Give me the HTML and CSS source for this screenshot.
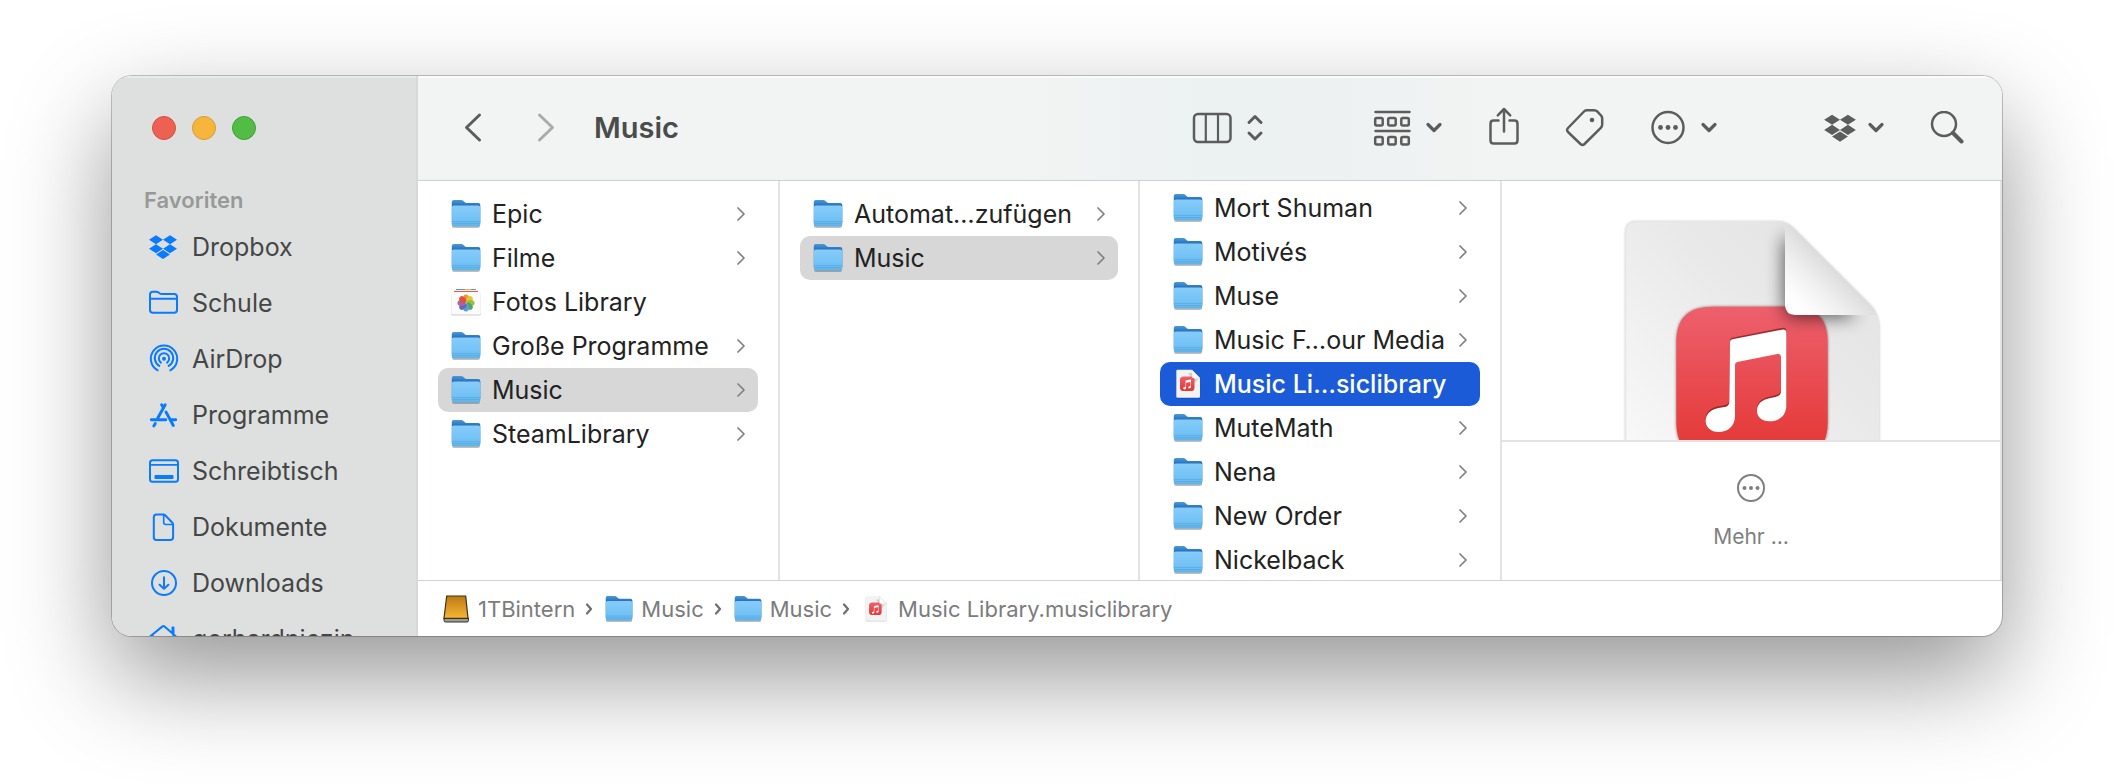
FILE: index.html
```html
<!DOCTYPE html>
<html lang="de">
<head>
<meta charset="utf-8">
<title>Music</title>
<link rel="stylesheet" href="styles.css">
</head>
<body>
<svg class="sprite" width="0" height="0" aria-hidden="true">
  <defs>
    <linearGradient id="folder-back" x1="0" y1="0" x2="0" y2="1">
      <stop offset="0" stop-color="#4a9ad8"/><stop offset=".3" stop-color="#1d66b6"/><stop offset="1" stop-color="#1d66b6"/>
    </linearGradient>
    <linearGradient id="folder-front" x1="0" y1="0" x2="0" y2="1">
      <stop offset="0" stop-color="#86ccf9"/><stop offset=".75" stop-color="#70c0f5"/><stop offset="1" stop-color="#5fb0e6"/>
    </linearGradient>
    <linearGradient id="red" x1="0" y1="0" x2="0" y2="1">
      <stop offset="0" stop-color="#ed606d"/><stop offset=".85" stop-color="#e53c3c"/><stop offset="1" stop-color="#e53a39"/>
    </linearGradient>
    <linearGradient id="sheet" gradientUnits="userSpaceOnUse" x1="1000" y1="200" x2="400" y2="800">
      <stop offset="0" stop-color="#e4e4e4"/><stop offset=".35" stop-color="#e9e9e9"/><stop offset="1" stop-color="#f8f8f8"/>
    </linearGradient>
    <linearGradient id="fold" gradientUnits="userSpaceOnUse" x1="1000" y1="258" x2="890" y2="368">
      <stop offset="0" stop-color="#dcdcdc"/><stop offset=".5" stop-color="#f0f0f0"/><stop offset="1" stop-color="#fefefe"/>
    </linearGradient>
    <linearGradient id="gold" x1="0" y1="0" x2="0" y2="1">
      <stop offset="0" stop-color="#bd7a17"/><stop offset="1" stop-color="#f6b534"/>
    </linearGradient>
    <filter id="blur-large" x="-30%" y="-30%" width="160%" height="160%"><feGaussianBlur stdDeviation="26"/></filter>
    <filter id="blur-small" x="-10%" y="-10%" width="120%" height="120%"><feGaussianBlur stdDeviation="5"/></filter>
    <clipPath id="sheet-clip"><path d="M377 155Q377 122 408 122H835Q860 122 880 142L1110 372Q1137 400 1137 440V1080H377Z"/></clipPath>
    <path id="note" d="M690 484Q690 477 697 475L845 446Q858 443 859 455V672C859 706 836 721 808 721C785 721 771 707 771 690C771 668 787 656 808 652L826 648Q843 645 843 630V528Q842 517 832 519L712 543Q705 545 705 552V704C705 735 684 753 655 753C632 753 617 738 617 720C617 698 634 685 655 681L674 678Q688 675 688 662Z"/>
  </defs>
  <symbol id="folder" viewBox="0 0 30 30">
    <path d="M1 5v22q0 2 2 2h24q2 0 2-2V6z" fill="#000" opacity=".25"/>
    <path d="M.8 3q0-2 2-2h7.4q1.300 0 2.300 1l1 1q.9.900 2.200.900H27.300q2 0 2 2V24H.8z" fill="url(#folder-back)"/>
    <path d="M.8 8.500q0-2 2-2h24.500q2 0 2 2v17q0 2-2 2H2.800q-2 0-2-2z" fill="url(#folder-front)"/>
    <path d="M1 22.500h28M1 24.500h28" stroke="#4d9fd6" stroke-width=".7" opacity=".7"/>
  </symbol>
  <symbol id="musicfile" viewBox="0 0 30 30">
    <path d="M3 2.500Q3 1 4.500 1H19l8.200 8.200V28q0 1.500-1.500 1.500H4.500Q3 29.500 3 28z" fill="#000" opacity=".18"/>
    <path d="M3.300 2Q3.300.8 4.500.8H19l8 8.200V27.500q0 1.200-1.200 1.200H4.500q-1.200 0-1.200-1.200z" fill="#f3f3f3"/>
    <path d="M15 4h4v6h6l-3 4z" fill="#999" opacity=".4"/>
    <rect x="7" y="7.500" width="14.500" height="14.500" rx="3.600" fill="url(#red)"/>
    <path d="M19 1v6.500q0 1.500 1.500 1.500H27z" fill="#fff" stroke="#bbb" stroke-width=".4"/>
    <use href="#note" transform="translate(-9.500 -3.700) scale(.0320)" fill="#fff"/>
  </symbol>
  <symbol id="photos" viewBox="0 0 30 30">
    <path d="M5 2.500h20" stroke="#4a9ed8" stroke-width="1"/><path d="M14 2.500h6" stroke="#d8c14a" stroke-width="1"/>
    <path d="M3 4.500h24" stroke="#e0603f" stroke-width="1.200"/>
    <rect x="0" y="6" width="30" height="22.500" rx="1.500" fill="#000" opacity=".2"/>
    <rect x=".2" y="5.300" width="29.600" height="22.200" rx="1.500" fill="#fbfbfb"/>
    <g transform="translate(15 16) scale(.95)" opacity=".95">
      <ellipse cy="-4.800" rx="3.100" ry="4.200" fill="#f08f23"/>
      <ellipse cy="-4.800" rx="3.100" ry="4.200" fill="#e0c62c" transform="rotate(45)"/>
      <ellipse cy="-4.800" rx="3.100" ry="4.200" fill="#96bb34" transform="rotate(90)"/>
      <ellipse cy="-4.800" rx="3.100" ry="4.200" fill="#45a557" transform="rotate(135)"/>
      <ellipse cy="-4.800" rx="3.100" ry="4.200" fill="#4f9bdb" transform="rotate(180)"/>
      <ellipse cy="-4.800" rx="3.100" ry="4.200" fill="#625db3" transform="rotate(225)"/>
      <ellipse cy="-4.800" rx="3.100" ry="4.200" fill="#a95a9d" transform="rotate(270)"/>
      <ellipse cy="-4.800" rx="3.100" ry="4.200" fill="#e04a35" transform="rotate(315)"/>
    </g>
  </symbol>
  <symbol id="drive" viewBox="0 0 26 28">
    <path d="M1 23h24.500v2.500q0 1.500-1.500 1.500H2.500Q1 27 1 25.500z" fill="#9b9c98" stroke="#33332e" stroke-width="1"/>
    <path d="M3.700 1h19l2.300 22.300H1z" fill="url(#gold)" stroke="#40300f" stroke-width="1.200"/>
  </symbol>
  <symbol id="next" viewBox="0 0 8 14"><path d="M1 1l6 6-6 6" fill="none" stroke="#808080" stroke-width="1.700" stroke-linecap="round" stroke-linejoin="round"/></symbol>
  <symbol id="step" viewBox="0 0 8 12"><path d="M2 1.500L6 6l-4 4.500" fill="none" stroke="#6e6e6e" stroke-width="2.200" stroke-linecap="round" stroke-linejoin="round"/></symbol>
  <symbol id="caret" viewBox="0 0 16 12"><path d="M2 2.500l6 6 6-6" fill="none" stroke="currentColor" stroke-width="3.200" stroke-linecap="round" stroke-linejoin="round"/></symbol>
  <symbol id="dropbox" viewBox="0 0 30 30">
    <path d="M8 3.200l7 4.500-7 4.500-7-4.500zM22 3.200l7 4.500-7 4.500-7-4.500zM8 12.200l7 4.500-7 4.500-7-4.500zM22 12.200l7 4.500-7 4.500-7-4.500zM15 18.100l7 4.500-7 4.500-7-4.500z" fill="currentColor"/>
  </symbol>
</svg>

<div class="window">
  <aside class="sidebar">
    <div class="lights">
      <button class="light close" aria-label="Schließen"></button>
      <button class="light minimize" aria-label="Im Dock ablegen"></button>
      <button class="light maximize" aria-label="Vollbild"></button>
    </div>
    <h2 class="sidebar-title">Favoriten</h2>
    <nav class="places">
      <a class="place" href="#"><svg class="place-icon" viewBox="0 0 32 30"><use href="#dropbox" width="30" height="30"/></svg>Dropbox</a>
      <a class="place" href="#"><svg class="place-icon line" viewBox="0 0 32 30"><path d="M2 6.500q0-2.800 2.800-2.800h3.400q1.400 0 2.400.8l1 .8q1 .7 2.200.7H26.200Q29 6 29 8.800V22q0 2.800-2.800 2.800H4.800Q2 24.800 2 22zM2 10.700h27"/></svg>Schule</a>
      <a class="place" href="#"><svg class="place-icon line" viewBox="0 0 32 30"><path d="M9.700 26.300a13.200 13.200 0 1 1 12.600 0M11.300 21.900a9.200 9.200 0 1 1 9.400 0M12.900 18.600a5.200 5.200 0 1 1 6.200 0"/><circle cx="16" cy="14.700" r="2" class="solid"/></svg>AirDrop</a>
      <a class="place" href="#"><svg class="place-icon line" viewBox="0 0 32 30"><path d="M17.200 4.700L9.800 18M13.600 4.700l2 3.300M18 12l7.300 13.500M3.300 19.700h14.500M22.500 19.700h5.200M7.300 23.500l-1.500 2.500" stroke-width="2.900"/></svg>Programme</a>
      <a class="place" href="#"><svg class="place-icon line" viewBox="0 0 32 30"><rect x="2" y="4.200" width="28" height="21.500" rx="2.500"/><path d="M2 8.900h28" stroke-width="1.600"/><rect x="6.500" y="19" width="19" height="4" rx="1" class="solid"/></svg>Schreibtisch</a>
      <a class="place" href="#"><svg class="place-icon line" viewBox="0 0 32 30"><path d="M8.500 2.500h7q1 0 1.700.7l7.200 7.600q.7.700.7 1.700V25.200q0 2.800-2.800 2.800H8.300q-2.500 0-2.500-2.800V5.300q0-2.800 2.700-2.800z"/><path d="M15.700 3v7.600q0 1.900 1.900 1.900H25" stroke-width="1.600"/></svg>Dokumente</a>
      <a class="place" href="#"><svg class="place-icon line" viewBox="0 0 32 30"><circle cx="16" cy="15" r="12"/><path d="M16 9.300v11.500M11.600 16.700l4.400 4.200 4.400-4.200"/></svg>Downloads</a>
      <a class="place" href="#"><svg class="place-icon line" viewBox="0 0 32 30"><path d="M2 12.500L14.500 2.400q1-.8 2 0L28 12.500M24.500 9V3.500h1V10M5 12v15h20V12"/></svg>gerhardniezin</a>
    </nav>
  </aside>

  <main class="main">
    <header class="toolbar">
      <button class="tool" aria-label="Zurück"><svg width="20" height="32" viewBox="0 0 20 32"><path d="M16.500 3L3.500 15.500l13 12.500" stroke-width="3"/></svg></button>
      <button class="tool forward" aria-label="Vorwärts"><svg width="20" height="32" viewBox="0 0 20 32"><path d="M3.500 3L16.500 15.500l-13 12.500" stroke-width="3"/></svg></button>
      <h1 class="title">Music</h1>
      <div class="tools">
        <button class="tool view" aria-label="Darstellung">
          <svg width="40" height="32" viewBox="0 0 40 32"><rect x="2" y="2" width="36.500" height="28" rx="4"/><path d="M13.800 2v28M26 2v28" stroke-width="2.200"/></svg>
          <svg width="18" height="30" viewBox="0 0 18 30"><path d="M3 9.500L9 3.500l6 6M3 20l6 6 6-6" stroke-width="3"/></svg>
        </button>
        <button class="tool" aria-label="Gruppieren">
          <svg width="38" height="38" viewBox="0 0 38 38"><path d="M2.500 3h34M2.500 22h34"/><rect x="2.200" y="9" width="7.500" height="7.500" rx="1.500"/><rect x="15.200" y="9" width="7.500" height="7.500" rx="1.500"/><rect x="28.300" y="9" width="7.500" height="7.500" rx="1.500"/><rect x="2.200" y="28" width="7.500" height="7.500" rx="1.500"/><rect x="15.200" y="28" width="7.500" height="7.500" rx="1.500"/><rect x="28.300" y="28" width="7.500" height="7.500" rx="1.500"/></svg>
          <svg class="caret"><use href="#caret"/></svg>
        </button>
        <button class="tool" aria-label="Teilen">
          <svg width="32" height="42" viewBox="0 0 32 42"><path d="M10.500 13.500H5.500Q2.500 13.500 2.500 16.500V33.500Q2.500 36.500 5.500 36.500H26.500Q29.500 36.500 29.500 33.500V16.500Q29.500 13.500 26.500 13.500H21.500M16 24.500V2.500M9.800 8.300L16 2l6.200 6.300"/></svg>
        </button>
        <button class="tool" aria-label="Tags">
          <svg width="40" height="40" viewBox="0 0 40 40"><path d="M21.500 2.200H29Q31 2.200 32.200 3.400L36 7.500Q37.200 8.700 37.200 10.400V16.500Q37.200 18.500 35.800 19.900L19.500 36Q17.500 37.800 15.500 36L3 24Q1.200 22 3 20L19 3.500Q20 2.200 21.500 2.200z"/><circle cx="27" cy="12" r="2.300" class="fill"/></svg>
        </button>
        <button class="tool" aria-label="Aktionen">
          <svg width="36" height="36" viewBox="0 0 36 36"><circle cx="18" cy="17.500" r="15.500"/><g class="fill"><circle cx="10.500" cy="17.500" r="2.400"/><circle cx="18" cy="17.500" r="2.400"/><circle cx="25.500" cy="17.500" r="2.400"/></g></svg>
          <svg class="caret"><use href="#caret"/></svg>
        </button>
        <button class="tool cloud" aria-label="Dropbox">
          <svg width="34" height="34"><use href="#dropbox"/></svg>
          <svg class="caret"><use href="#caret"/></svg>
        </button>
        <button class="tool" aria-label="Suchen">
          <svg width="34" height="34" viewBox="0 0 34 34"><circle cx="14" cy="13" r="12"/><path d="M23 22l8.500 8.500" stroke-width="3.600"/></svg>
        </button>
      </div>
    </header>

    <div class="browser">
      <ul class="column">
        <li><a class="row" href="#"><svg class="icon"><use href="#folder"/></svg><span class="name">Epic</span><svg class="next"><use href="#next"/></svg></a></li>
        <li><a class="row" href="#"><svg class="icon"><use href="#folder"/></svg><span class="name">Filme</span><svg class="next"><use href="#next"/></svg></a></li>
        <li><a class="row" href="#"><svg class="icon"><use href="#photos"/></svg><span class="name">Fotos Library</span></a></li>
        <li><a class="row" href="#"><svg class="icon"><use href="#folder"/></svg><span class="name">Große Programme</span><svg class="next"><use href="#next"/></svg></a></li>
        <li><a class="row open" href="#"><svg class="icon"><use href="#folder"/></svg><span class="name">Music</span><svg class="next"><use href="#next"/></svg></a></li>
        <li><a class="row" href="#"><svg class="icon"><use href="#folder"/></svg><span class="name">SteamLibrary</span><svg class="next"><use href="#next"/></svg></a></li>
      </ul>
      <ul class="column">
        <li><a class="row" href="#"><svg class="icon"><use href="#folder"/></svg><span class="name">Automat…zufügen</span><svg class="next"><use href="#next"/></svg></a></li>
        <li><a class="row open" href="#"><svg class="icon"><use href="#folder"/></svg><span class="name">Music</span><svg class="next"><use href="#next"/></svg></a></li>
      </ul>
      <ul class="column scrolled">
        <li><a class="row" href="#"><svg class="icon"><use href="#folder"/></svg><span class="name">Mort Shuman</span><svg class="next"><use href="#next"/></svg></a></li>
        <li><a class="row" href="#"><svg class="icon"><use href="#folder"/></svg><span class="name">Motivés</span><svg class="next"><use href="#next"/></svg></a></li>
        <li><a class="row" href="#"><svg class="icon"><use href="#folder"/></svg><span class="name">Muse</span><svg class="next"><use href="#next"/></svg></a></li>
        <li><a class="row" href="#"><svg class="icon"><use href="#folder"/></svg><span class="name">Music F…our Media</span><svg class="next"><use href="#next"/></svg></a></li>
        <li><a class="row selected" href="#"><svg class="icon"><use href="#musicfile"/></svg><span class="name">Music Li…siclibrary</span></a></li>
        <li><a class="row" href="#"><svg class="icon"><use href="#folder"/></svg><span class="name">MuteMath</span><svg class="next"><use href="#next"/></svg></a></li>
        <li><a class="row" href="#"><svg class="icon"><use href="#folder"/></svg><span class="name">Nena</span><svg class="next"><use href="#next"/></svg></a></li>
        <li><a class="row" href="#"><svg class="icon"><use href="#folder"/></svg><span class="name">New Order</span><svg class="next"><use href="#next"/></svg></a></li>
        <li><a class="row" href="#"><svg class="icon"><use href="#folder"/></svg><span class="name">Nickelback</span><svg class="next"><use href="#next"/></svg></a></li>
      </ul>
      <section class="preview">
        <div class="artwork">
          <svg width="262" height="346" viewBox="360 108 786 1038" role="img" aria-label="Music Library">
            <path d="M377 155Q377 122 408 122H835Q860 122 880 142L1110 372Q1137 400 1137 440V1080H377Z" fill="#000" opacity=".3" filter="url(#blur-small)"/>
            <path d="M377 155Q377 122 408 122H835Q860 122 880 142L1110 372Q1137 400 1137 440V1080H377Z" fill="url(#sheet)" stroke="#e6e6e6" stroke-width="4"/>
            <path d="M529 485C529 410 565 377 640 377H872C947 377 983 410 983 485V723C983 798 947 831 872 831H640C565 831 529 798 529 723Z" fill="#5a1010" opacity=".6" filter="url(#blur-small)"/>
            <path d="M529 485C529 410 565 377 640 377H872C947 377 983 410 983 485V723C983 798 947 831 872 831H640C565 831 529 798 529 723Z" fill="url(#red)"/>
            <use href="#note" y="-5" fill="#7c1a1a" opacity=".7"/>
            <use href="#note" fill="#fff"/>
            <g clip-path="url(#sheet-clip)"><path d="M850 160V375Q858 410 885 410H1070L880 180z" fill="#000" opacity=".6" filter="url(#blur-large)"/></g>
            <path d="M855 126V373Q857 402 885 402H1129Q1122 384 1110 372L880 142Q868 130 855 126z" fill="url(#fold)"/>
          </svg>
        </div>
        <div class="more-area">
          <button class="more">
            <svg width="30" height="30" viewBox="0 0 30 30"><circle cx="15" cy="15" r="13" fill="none" stroke="currentColor" stroke-width="2"/><g fill="currentColor"><circle cx="8.500" cy="15" r="2"/><circle cx="15" cy="15" r="2"/><circle cx="21.500" cy="15" r="2"/></g></svg>
            <span>Mehr …</span>
          </button>
        </div>
      </section>
    </div>

    <nav class="path">
      <a class="crumb" href="#"><svg class="crumb-icon"><use href="#drive"/></svg>1TBintern</a>
      <svg class="step"><use href="#step"/></svg>
      <a class="crumb" href="#"><svg class="crumb-icon"><use href="#folder"/></svg>Music</a>
      <svg class="step"><use href="#step"/></svg>
      <a class="crumb" href="#"><svg class="crumb-icon"><use href="#folder"/></svg>Music</a>
      <svg class="step"><use href="#step"/></svg>
      <a class="crumb last" href="#"><svg class="crumb-icon"><use href="#musicfile"/></svg>Music Library.musiclibrary</a>
    </nav>
  </main>
</div>
</body>
</html>
```

FILE: styles.css
```css
* { box-sizing: border-box; }

body {
  margin: 0;
  padding: 76px 112px 148px;
  min-height: 100vh;
  background: #fff;
  color: #222;
  font-family: Inter, "Liberation Sans", sans-serif;
  font-size: 25px;
  line-height: 32px;
}

a { color: inherit; text-decoration: none; }

button {
  margin: 0;
  padding: 0;
  border: 0;
  background: none;
  font: inherit;
  color: inherit;
}

svg { display: block; flex: none; }

.sprite { position: absolute; }

.window {
  display: flex;
  height: calc(100vh - 224px);
  min-height: 400px;
  border-radius: 20px;
  overflow: hidden;
  background: #fff;
  box-shadow: 0 0 0 1px rgba(0, 0, 0, .22), 0 40px 100px rgba(0, 0, 0, .42);
}

/* Sidebar */

.sidebar {
  flex: none;
  width: 306px;
  overflow: hidden;
  background: #dee0df;
  border-right: 2px solid #d6d9d8;
  box-shadow: inset 0 2px #e9eaea;
}

.lights {
  display: flex;
  align-items: center;
  gap: 16px;
  height: 104px;
  padding-left: 40px;
}

.light {
  width: 24px;
  height: 24px;
  border: 1px solid;
  border-radius: 50%;
}

.close { background: #ed6152; border-color: #d5503f; }
.minimize { background: #f6b53d; border-color: #d99b30; }
.maximize { background: #53bc45; border-color: #40a033; }

.sidebar-title {
  margin: 0;
  padding: 4px 0 3px 32px;
  color: #979998;
  font-size: 22px;
  font-weight: 600;
}

.place {
  display: flex;
  align-items: center;
  gap: 12px;
  height: 56px;
  padding-left: 36px;
  color: #454746;
  white-space: nowrap;
}

.place-icon { width: 32px; height: 30px; color: #0a7aff; }

.line {
  fill: none;
  stroke: currentColor;
  stroke-width: 2;
  stroke-linecap: round;
  stroke-linejoin: round;
}

.line .solid { fill: currentColor; stroke: none; }

/* Toolbar */

.main {
  display: flex;
  flex: 1;
  flex-direction: column;
  min-width: 0;
}

.toolbar {
  display: flex;
  flex: none;
  align-items: center;
  height: 105px;
  padding: 0 38px 0 45px;
  background: linear-gradient(90deg, #f2f4f3 38%, #ecf1f2 50%, #edf1f2 58%, #f2f4f3 68%);
  border-bottom: 1px solid #cfd1d0;
  box-shadow: inset 0 2px #fafbfa;
  color: #5b5d5c;
}

.tool { display: flex; align-items: center; gap: 14px; }

.tool svg {
  fill: none;
  stroke: currentColor;
  stroke-width: 2.5px;
  stroke-linecap: round;
  stroke-linejoin: round;
}

.tool path[stroke-width="3"] { stroke-width: 3px; }
.tool path[stroke-width="3.600"] { stroke-width: 4px; }
.tool .fill { fill: currentColor; stroke: none; }
.tool .caret { width: 18px; height: 12px; }
.tool use[href="#dropbox"] { stroke: none; }

.forward { margin-left: 53px; color: #aaacab; }

.title {
  margin: 0 0 0 38px;
  color: #4a4c4b;
  font-size: 29px;
  font-weight: 600;
}

.tools {
  display: flex;
  align-items: center;
  gap: 45px;
  margin-left: auto;
}

.view { margin-right: 64px; }
.cloud { margin-left: 60px; gap: 10px; }

/* Columns */

.browser {
  display: grid;
  flex: 1;
  grid-template-columns: 362fr 360fr 362fr 500fr;
  min-height: 0;
}

.column {
  min-width: 0;
  margin: 0;
  padding: 11px 20px 0;
  overflow: hidden;
  border-right: 2px solid #e3e3e3;
  list-style: none;
}

.scrolled { padding-top: 5px; }

.row {
  display: flex;
  align-items: center;
  height: 44px;
  padding: 0 13px;
  border-radius: 10px;
}

.open { background: #d7d7d7; }
.selected { background: #1b5bd8; color: #fff; font-weight: 500; }

.icon { width: 30px; height: 30px; margin-right: 11px; }
.name { flex: 1; white-space: nowrap; }
.next { width: 8px; height: 14px; }

.preview {
  display: flex;
  flex-direction: column;
  min-width: 0;
  min-height: 0;
  border-right: 2px solid #e3e3e3;
}

.artwork {
  display: flex;
  flex: 1;
  align-items: flex-start;
  justify-content: center;
  min-height: 0;
  padding-top: 36px;
  overflow: hidden;
}

.more-area {
  display: flex;
  flex: none;
  justify-content: center;
  height: 140px;
  padding-top: 31px;
  border-top: 2px solid #e3e3e3;
}

.more {
  display: flex;
  flex-direction: column;
  align-items: center;
  align-self: flex-start;
  gap: 18px;
  color: #7f7f7f;
  font-size: 21px;
}

/* Path bar */

.path {
  display: flex;
  flex: none;
  align-items: center;
  height: 56px;
  padding-left: 24px;
  border-top: 1px solid #d2d2d2;
  color: #7c7c7c;
  font-size: 22px;
  white-space: nowrap;
}

.crumb { display: flex; align-items: center; gap: 8px; }
.crumb-icon { width: 28px; height: 28px; }
.last .crumb-icon { height: 26px; }
.step { width: 8px; height: 12px; margin: 0 12px 0 10px; }
```
